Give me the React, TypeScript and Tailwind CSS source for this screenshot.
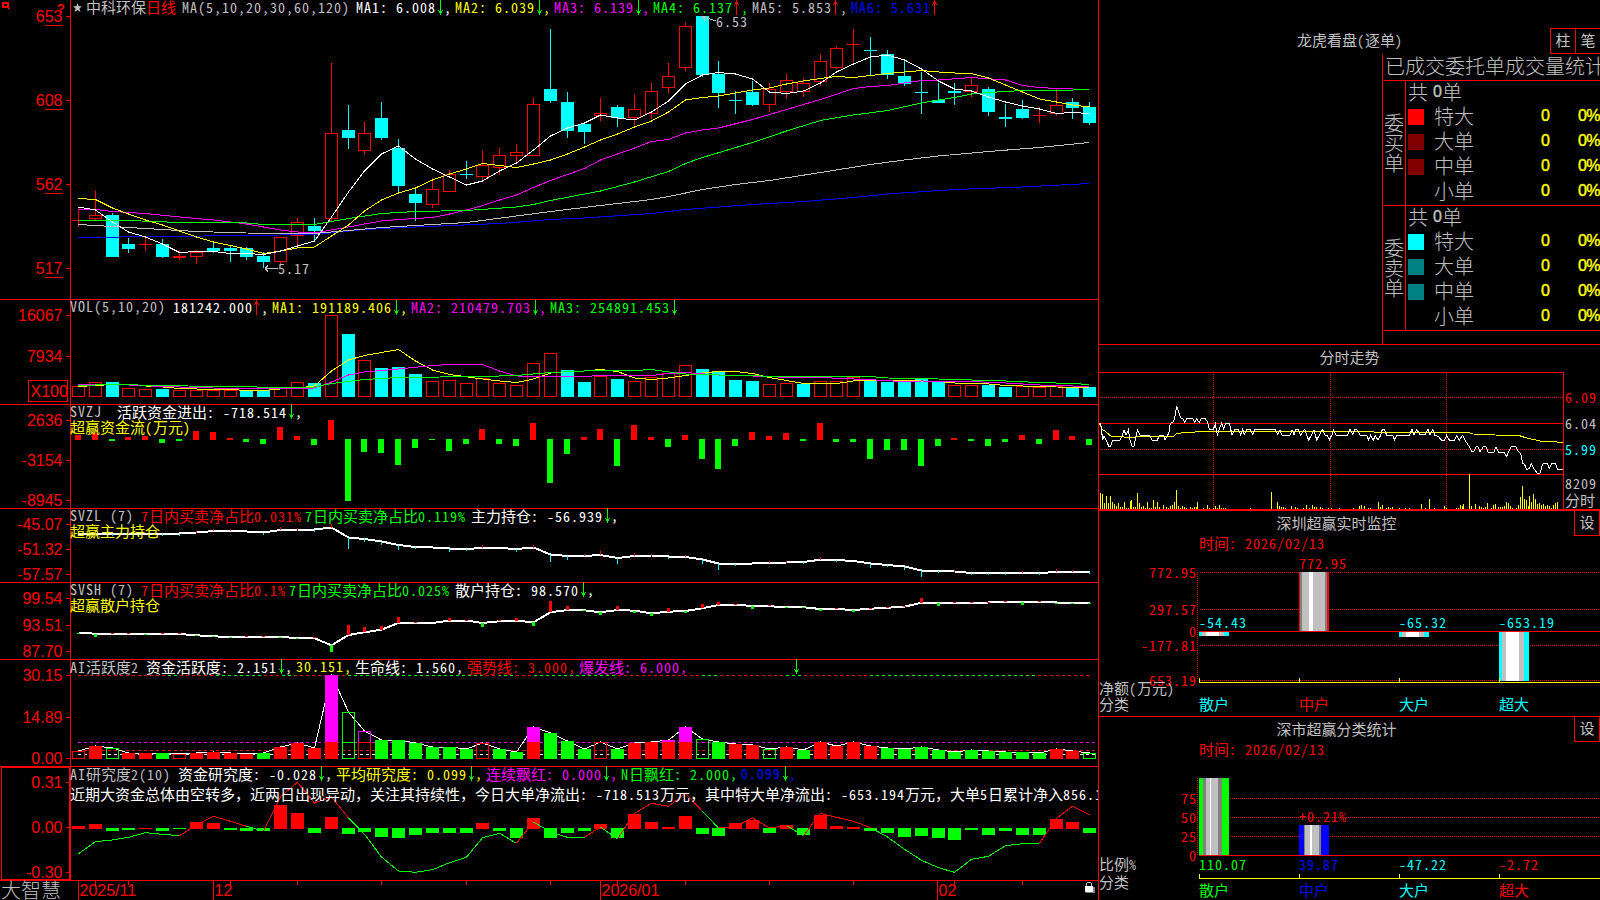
import React from 'react';

const RED = '#ff0000';
const GREEN = '#00ff00';
const CYAN = '#00ffff';
const YELLOW = '#ffff00';
const MAGENTA = '#ff00ff';
const BLUE = '#0000ff';
const SILVER = '#c0c0c0';
const GRAY = '#808080';
const WHITE = '#ffffff';

type Point = [number, number];

// Pixel column of the i-th trading day (7 days take 118px)
const dayX = (i: number) => Math.floor(78.35 + (i * 118) / 7);

const toPoints = (pts: Point[]) => pts.map(([i, y]) => `${dayX(i) + 0.5},${y}`).join(' ');
const series = (ys: number[]): Point[] => ys.map((y, i) => [i, y]);

/* ---------- data ---------- */

// [up/down, high, bodyTop, bodyBottom, low]
const candles: [string, number, number, number, number][] = [
  ['r', 209, 220, 221, 227], ['r', 191, 215, 219, 221], ['c', 213, 215, 257, 257], ['c', 238, 244, 249, 253],
  ['r', 237, 244, 245, 251], ['c', 239, 244, 257, 258], ['r', 250, 256, 258, 260], ['r', 250, 252, 257, 264],
  ['c', 242, 248, 251, 253], ['c', 246, 248, 251, 262], ['c', 247, 248, 257, 260], ['c', 252, 256, 262, 268],
  ['r', 237, 237, 262, 267], ['r', 218, 222, 236, 245], ['c', 218, 226, 231, 240], ['r', 63, 133, 219, 222],
  ['c', 105, 130, 138, 149], ['r', 122, 133, 151, 155], ['c', 102, 118, 138, 140], ['c', 139, 148, 186, 192],
  ['c', 188, 194, 203, 221], ['r', 178, 189, 205, 208], ['r', 170, 174, 192, 192], ['c', 161, 174, 175, 179],
  ['r', 150, 165, 177, 181], ['r', 148, 155, 168, 175], ['r', 144, 152, 156, 162], ['r', 98, 104, 156, 156],
  ['c', 29, 89, 101, 103], ['c', 92, 102, 131, 138], ['c', 122, 124, 132, 144], ['r', 98, 113, 116, 121],
  ['c', 105, 107, 118, 127], ['r', 94, 109, 118, 125], ['r', 83, 91, 114, 119], ['r', 63, 76, 88, 93],
  ['r', 22, 26, 68, 71], ['c', 16, 16, 75, 77], ['c', 61, 74, 93, 108], ['c', 91, 100, 101, 114],
  ['c', 81, 92, 105, 106], ['r', 83, 89, 105, 112], ['r', 74, 80, 92, 99], ['r', 78, 83, 92, 97],
  ['r', 54, 61, 82, 86], ['r', 46, 48, 68, 69], ['r', 29, 44, 45, 62], ['c', 37, 50, 51, 75],
  ['c', 50, 54, 75, 79], ['c', 59, 76, 84, 86], ['c', 72, 92, 93, 114], ['c', 83, 100, 103, 103],
  ['c', 83, 91, 93, 105], ['r', 78, 85, 92, 97], ['c', 87, 89, 112, 116], ['c', 104, 117, 119, 127],
  ['c', 100, 109, 118, 119], ['r', 107, 115, 116, 123], ['r', 89, 105, 114, 116], ['c', 98, 102, 108, 119],
  ['c', 102, 107, 123, 125],
];

const priceLines: { color: string; pts: Point[] }[] = [
  { color: BLUE, pts: [[0, 237.5], [5, 236.5], [10, 235.5], [14, 234.5], [17, 229.5], [20, 227], [25, 223.5], [28, 219.5], [30, 218], [34, 213.5], [36, 209.5], [40, 204.5], [43, 201.5], [46, 197.5], [48, 194], [52, 189.5], [56, 187], [60, 183.5]] },
  { color: SILVER, pts: [[0, 224.5], [2, 226.5], [4, 228.5], [7, 231.5], [10, 233], [14, 233.5], [16, 230.5], [18, 227.5], [20, 225.5], [23, 222.5], [26, 216], [28, 211.5], [31, 205.5], [34, 199.5], [35, 196.5], [37, 189.5], [39, 184.5], [41, 180.5], [44, 172.5], [47, 164.5], [49, 160], [51, 156], [54, 151.5], [57, 147.5], [60, 142.5]] },
  { color: MAGENTA, pts: [[0, 209.5], [1, 209.5], [2, 211.5], [4, 213.5], [6, 217], [8, 220], [9, 222], [10, 224], [11, 227], [12, 230], [13, 232], [14, 233], [16, 227], [17, 224], [18, 221], [19, 219.5], [21, 217.5], [22, 214], [23, 210], [24, 205.5], [25, 200], [26, 195], [27, 187.5], [28, 180.5], [30, 168.5], [31, 160], [33, 148], [34, 141.5], [35, 139.5], [36, 133], [37, 130], [38, 128], [40, 119.5], [42, 109.5], [44, 99.5], [46, 88.5], [47, 86.5], [48, 85.5], [50, 80.5], [51, 80], [53, 77.5], [55, 80], [56, 85.5], [57, 87.5], [58, 88.5], [59, 88.5]] },
  { color: GREEN, pts: [[0, 220.5], [3, 220.5], [6, 222.5], [10, 223], [11, 224.5], [14, 224.5], [16, 218.5], [18, 213.5], [20, 211.5], [23, 210.5], [26, 207], [27, 204.5], [28, 200.5], [31, 191], [33, 182], [35, 171.5], [36, 163.5], [37, 157.5], [40, 142.5], [42, 131], [44, 120.5], [46, 115], [48, 110.5], [50, 103], [52, 97.5], [53, 94], [54, 92.5], [56, 90.5], [58, 90.5], [60, 89.5]] },
  { color: YELLOW, pts: series([198.5, 199.5, 208, 214, 220, 225, 231, 237, 242, 245.5, 249, 253.5, 251, 248, 247, 236, 225, 211, 200, 193, 188, 180, 174, 169, 163.5, 165.5, 167.5, 164, 160, 154, 147, 140, 134, 127, 121, 112, 100, 97.5, 96, 93, 90, 88, 84, 81, 78.5, 76.5, 77.5, 75.5, 73.5, 72, 70.5, 72, 73, 73.5, 78, 85, 92, 99, 102, 105, 107]) },
  { color: WHITE, pts: series([207, 210, 222, 232, 237, 244, 252.5, 251.5, 251.5, 253.5, 253.5, 254.5, 251, 246, 241, 217, 192, 171, 154, 146, 159, 169, 177, 185, 181, 171, 163, 150, 136, 128, 123, 115, 118, 120, 112, 101, 84, 75, 72.5, 74, 79, 92, 93.5, 91, 83, 72, 64, 57, 55, 60, 69, 81, 89, 91, 97, 102, 106, 109, 113.5, 112.5, 113.5]) },
];

const volumeTops = [
  386, 382, 382, 388, 389, 389, 390, 390, 390, 390, 390, 390, 388, 382, 383, 315, 334, 360, 368, 367, 374, 381, 380, 383, 378, 383, 385, 363, 353, 370,
  382, 376, 379, 381, 377, 373, 365, 369, 371, 380, 381, 384, 383, 384, 381, 381, 377, 381, 382, 382, 379, 381, 385, 385, 385, 387, 386, 387, 386, 388, 387,
];
const volumeColors = 'rrcrrcrrrrccrrcrcrcccrrrrrrrrccrcrrrrccccrrcrrrcccccrrccrrrcc';

const volumeLines: { color: string; pts: Point[] }[] = [
  { color: YELLOW, pts: [[0, 386.5], [1, 385.5], [2, 384.5], [3, 384.5], [4, 386], [5, 387], [6, 388.5], [8, 389.5], [11, 390.5], [12, 389], [13, 388], [14, 386], [15, 371], [16, 360], [17, 355.5], [18, 352.5], [19, 349.5], [20, 361], [21, 370], [22, 374.5], [24, 379], [25, 381], [26, 382.5], [27, 379], [28, 373], [29, 371.5], [30, 371], [31, 369.5], [32, 371.5], [33, 378], [34, 379.5], [35, 378], [36, 375.5], [37, 373], [38, 371.5], [39, 371.5], [40, 373.5], [41, 377.5], [42, 380.5], [43, 383.5], [45, 383.5], [46, 381], [48, 380.5], [50, 381], [51, 381.5], [52, 383], [54, 384], [55, 385.5], [58, 387], [60, 387.5]] },
  { color: MAGENTA, pts: [[0, 384.5], [3, 385], [5, 386.5], [8, 388], [11, 389], [14, 388], [15, 382], [16, 375], [17, 372], [19, 369], [21, 365.5], [22, 364.5], [24, 364.5], [25, 371], [26, 376], [30, 376.5], [31, 375.5], [34, 375.5], [35, 373.5], [36, 372.5], [38, 375], [41, 376.5], [42, 377.5], [44, 377.5], [46, 379], [48, 380.5], [49, 382], [50, 381], [53, 381.5], [55, 383], [57, 385], [60, 386.5]] },
  { color: GREEN, pts: [[0, 385.5], [2, 384.5], [8, 386.5], [13, 387.5], [14, 387], [15, 383.5], [17, 379.5], [19, 377.5], [24, 376.5], [26, 375.5], [28, 372.5], [30, 371], [33, 370.5], [34, 369.5], [35, 372], [36, 374], [38, 375], [40, 375.5], [41, 376.5], [47, 376.5], [48, 378], [50, 378.5], [52, 379.5], [55, 381], [57, 382.5], [59, 383.5], [60, 384.5]] },
];

// Net inflow per day, signed bar heights
const flow = [
  5, 7, -2, 3, 4, -4, -2, 9, 8, 2, -3, -5, 13, 4, -6, 20, -62, -13, -14, -26, -9, -1, -12, -5, 11, -5, -7, 17, -44, -15,
  3, 11, -27, 15, 3, -8, 5, -20, -30, -7, 8, 4, 7, -2, 17, -3, -3, -20, -11, -11, -27, -7, 2, -2, -7, -3, 5, -5, 10, 4, -6,
];

const mainHold = [
  534, 533.5, 533.5, 533.5, 533.5, 533.5, 533.5, 532.5, 531, 531, 531.5, 532.5, 530, 529.5, 529.5, 527.5, 537.5, 539, 541.5, 545, 547, 547.5, 548.5, 549, 548, 548, 549, 547.5, 554.5, 556,
  556, 555, 558, 556, 555.5, 556.5, 557, 559.5, 563.5, 564, 563.5, 563, 562.5, 562, 559.7, 560, 561, 563.5, 565, 566.5, 570.5, 571, 571.5, 573, 573, 573, 573, 573, 572, 572, 572,
];
const mainTicks = [
  0, 1, -1, 1, 0, -1, -1, 1, 1, 1, 0, -1, 2, 1, -1, 3, -10, -2, -2, -4, -1, 0, -2, -1, 2, 0, -2, 2, -6, -3,
  1, 3, -5, 2, 1, -1, 1, -3, -5, -1, 0, 1, 1, -1, 2, -1, 0, -3, -1, -2, -5, -1, 1, -1, -1, -1, 1, -1, 2, 1, -1,
];

const retailHold = [
  632.7, 633.7, 634, 634, 634, 634, 634, 635.3, 636.3, 637, 637, 637, 637, 638, 638.3, 645.3, 635, 632.3, 629.7, 623, 623, 623, 620.5, 620.5, 623, 621.3, 620.7, 622.3, 612.3, 610,
  610.3, 612.3, 610, 610.7, 613.3, 611.7, 611, 608.3, 605, 604.7, 606, 606.3, 607, 607.3, 609, 609, 610, 608.7, 607.7, 606.7, 602.7, 603, 603, 603, 602.5, 602, 602, 602, 602.5, 603, 603,
];
const retailTicks = [
  -1, -3, 1, 1, -1, 1, 1, -1, -1, -1, 1, 1, -1, -1, 1, -7, 10, 5, 4, 6, 1, 0, 3, 1, -4, 1, 3, -4, 11, 4,
  -1, -3, 4, -2, -3, 4, -2, 4, 3, 1, -3, 1, -1, -1, -2, 1, -2, 1, 1, 1, 5, -3, 1, 1, 1, 1, -3, 1, -1, -1, -1,
];

// R/G filled, r/g hollow, M magenta over red, m hollow magenta over hollow red, h hollow green split at the burst line
const activityKinds = 'rRgRRGrRRRRGRRRMhmGGGGGGrGGMGGGrGRRMMgGRRgRGRRRRGGGGGGGGGGRRg';
const activityTops = [
  751, 746, 748, 753, 753, 753, 754, 753, 752, 753, 754, 753, 747, 743, 748, 675, 712, 731, 740, 740, 743, 747, 747, 749, 743, 749, 752, 727, 733, 741,
  749, 742, 749, 743, 742, 740, 727, 739, 742, 744, 745, 749, 747, 750, 742, 746, 742, 746, 748, 749, 747, 750, 752, 750, 751, 752, 752, 753, 749, 751, 753,
];
// [from, to, color]
const trendBand: [number, number, string][] = [
  [78, 165, RED], [165, 180, GREEN], [180, 214, RED], [214, 262, GREEN], [262, 281, RED], [281, 295, GREEN], [295, 348, RED], [348, 482, GREEN],
  [482, 499, RED], [499, 516, GREEN], [516, 533, RED], [533, 616, GREEN], [616, 701, RED], [701, 717, GREEN], [717, 786, RED], [786, 803, GREEN], [803, 870, RED], [870, 1038, GREEN], [1038, 1089, RED],
];

const research = [
  3, 5, -3, -2, 1, -3, -1, 7, 6, -2, -3, -3, 24, 16, -5, 12, -6, -4, -9, -10, -7, -5, -5, -5, 6, -3, -10, 11, -10, -5,
  -3, 5, -10, 15, 7, 2, 13, -6, -8, 6, 9, -5, 4, -7, 14, 3, 2, -3, -5, -9, -8, -10, -12, -2, -7, -3, -7, -7, 10, 7, -5,
];
const researchLine = [
  853.7, 841.7, 840, 837.3, 832.7, 834.3, 835.7, 825, 816.3, 821.3, 826.3, 831, 796.7, 782.3, 803, 797, 818, 834.3, 857, 871, 872.3, 869.7, 862.7, 857.3, 837.7, 833.3, 843.3, 822, 832, 837.3,
  837.3, 827, 839, 813.3, 803.3, 806.3, 793.3, 811.3, 828, 826.7, 817.7, 828, 825.7, 835.7, 813.3, 817.3, 821.3, 827.7, 837, 849.3, 860.3, 867.7, 872.3, 859.3, 856.3, 845.7, 843.7, 843.3, 818.3, 806.3, 814.7,
];
// [firstDay, lastDay, color]
const researchRuns: [number, number, string][] = [
  [0, 6, GREEN], [6, 10, RED], [10, 11, GREEN], [11, 16, RED], [16, 26, GREEN], [26, 27, RED], [27, 30, GREEN], [30, 31, RED], [31, 32, GREEN],
  [32, 37, RED], [37, 38, GREEN], [38, 42, RED], [42, 43, GREEN], [43, 47, RED], [47, 57, GREEN], [57, 60, RED],
];

// Intraday chart, in thirds of a pixel from its top left corner
const intraday =
  '28,250 32,250 38,300 42,288 48,300 56,318 62,318 68,300 90,300 97,285 102,270 108,285 115,270 120,300 126,318 132,318 138,290 142,270 150,286 178,286 186,300 202,300 208,286 220,286 225,300 232,286 236,282 241,250 250,245 254,235 260,199 266,216 272,234 278,236 284,248 290,236 308,236 314,248 320,236 328,248 334,236 346,236 352,245 358,267 370,268 376,252 382,284 390,262 395,250 401,268 407,250 418,250 426,284 434,268 445,268 452,284 458,268 463,284 470,268 480,268 488,284 495,268 555,268 563,284 570,270 576,286 600,286 606,270 612,284 618,268 625,268 632,286 644,268 650,286 656,300 664,286 672,270 680,300 688,286 698,268 705,286 712,286 718,300 726,284 730,270 738,286 772,286 780,268 788,284 795,268 802,270 810,286 830,286 836,300 842,286 850,300 856,288 864,300 872,286 877,268 884,270 890,286 908,286 914,300 920,286 958,286 966,268 972,284 980,268 990,284 1006,284 1014,268 1020,284 1028,268 1034,286 1046,290 1054,300 1064,300 1070,286 1078,300 1094,300 1100,288 1108,300 1118,286 1126,302 1138,320 1146,336 1152,334 1158,320 1164,320 1170,336 1180,320 1188,320 1194,336 1212,336 1218,320 1226,336 1242,336 1250,350 1258,330 1264,320 1278,320 1286,336 1292,340 1298,370 1304,374 1310,388 1318,386 1324,370 1332,386 1344,402 1350,400 1358,372 1372,370 1378,386 1386,370 1396,370 1402,388 1418,388';
const intradayAvg =
  '28,250 36,268 46,274 62,288 85,290 120,292 150,290 240,290 252,288 260,281 285,277 345,275 500,275 800,275 900,277 1135,277 1150,282 1215,285 1285,286 1310,294 1350,303 1418,307';
const thirds = (s: string) =>
  s.split(' ').map((p) => {
    const [x, y] = p.split(',').map(Number);
    return `${1090 + x / 3},${340 + y / 3}`;
  }).join(' ');

// [x offset, height]
const ticks: Point[] = [
  [10, 16], [12, 15], [14, 6], [16, 13], [18, 6], [20, 13], [22, 7], [24, 5], [26, 3], [28, 6], [30, 2], [32, 2], [34, 7], [36, 1], [38, 1], [40, 8], [41, 9], [43, 2], [45, 2], [47, 16],
  [49, 6], [51, 2], [53, 3], [55, 1], [57, 7], [59, 1], [61, 1], [63, 9], [65, 2], [67, 7], [69, 2], [73, 4], [76, 2], [78, 1], [80, 3], [82, 4], [84, 7], [86, 19], [88, 3], [90, 1], [92, 3],
  [94, 2], [96, 1], [100, 2], [102, 1], [104, 2], [106, 2], [107, 7], [113, 1], [117, 4], [119, 1], [123, 1], [125, 3], [127, 1], [129, 4], [131, 1], [133, 1], [135, 1], [160, 1], [181, 17],
  [187, 7], [189, 3], [191, 2], [193, 2], [195, 1], [201, 3], [205, 2], [207, 1], [213, 1], [216, 4], [219, 1], [222, 4], [224, 2], [226, 2], [230, 2], [232, 1], [238, 1], [241, 1], [249, 1],
  [263, 1], [269, 3], [271, 4], [274, 3], [278, 1], [280, 1], [288, 7], [290, 2], [292, 4], [296, 1], [298, 2], [300, 1], [302, 2], [309, 1], [315, 1], [319, 1], [331, 5], [335, 1], [339, 10],
  [344, 1], [354, 3], [356, 1], [366, 1], [368, 1], [370, 4], [372, 3], [373, 5], [379, 35], [381, 3], [385, 5], [389, 3], [391, 2], [393, 1], [395, 2], [397, 6], [401, 1], [403, 4], [405, 5],
  [408, 2], [410, 2], [412, 2], [414, 3], [416, 7], [418, 6], [420, 3], [422, 1], [426, 1], [428, 4], [430, 12], [432, 23], [434, 10], [436, 9], [438, 3], [439, 13], [441, 7], [443, 15],
  [445, 10], [447, 5], [449, 6], [451, 4], [453, 5], [455, 3], [457, 4], [459, 3], [461, 1], [463, 4], [465, 6], [467, 7],
];

/* ---------- text ---------- */

const FONT = '[font-family:"Noto_Sans_CJK_SC",sans-serif]';

// Latin runs sit on an 8px cell, Chinese characters on a 15px one
function Mixed({ text }: { text: string }) {
  return (
    <>
      {text.split(/([\u3000-\u9fff\uff00-\uffef]+)/).map((run, i) =>
        i % 2 ? <span key={i} className="text-[15px] tracking-normal [font-feature-settings:normal]">{run}</span> : run
      )}
    </>
  );
}

function Txt({ text, className = '' }: { text: string; className?: string }) {
  return (
    <span className={`whitespace-pre text-[14px] leading-[15px] tracking-[1px] [font-feature-settings:"hwid"] ${className}`}>
      <Mixed text={text} />
    </span>
  );
}

interface LabelProps {
  x: number;
  y: number; // vertical centre
  text: string;
  color: string;
  end?: boolean;
}

function Label({ x, y, text, color, end }: LabelProps) {
  return (
    <text
      x={x}
      y={y + 5}
      fill={color}
      textAnchor={end ? 'end' : 'start'}
      className='whitespace-pre text-[14px] tracking-[1px] [font-feature-settings:"hwid"]'
    >
      {text.split(/([\u3000-\u9fff]+)/).filter(Boolean).map((run, i) => (
        <tspan key={i} className={/[\u3000-\u9fff]/.test(run) ? 'text-[15px] tracking-normal' : ''}>{run}</tspan>
      ))}
    </text>
  );
}

function Arrow({ up }: { up?: boolean }) {
  return (
    <svg viewBox="0 0 8 15" className={up ? 'w-2 h-[15px] shrink-0 rotate-180' : 'w-2 h-[15px] shrink-0'} shapeRendering="crispEdges">
      <path d="M4 0h1v15h-1zM3 11h3v2h-3zM2 10h1v1h-1zM6 10h1v1h-1z" fill={up ? RED : GREEN} />
    </svg>
  );
}

interface ItemProps {
  text: string;
  color: string; // tailwind text colour
  dir?: 'up' | 'down';
  comma?: boolean;
}

function Item({ text, color, dir, comma = true }: ItemProps) {
  return (
    <span className={`flex mr-[3px] ${color}`}>
      <Txt text={text} />
      {dir && <Arrow up={dir === 'up'} />}
      {comma && <Txt text="," />}
    </span>
  );
}

/* ---------- left column ---------- */

interface PanelProps {
  top: number;
  height: string;
  ticks: [number, string][];
  axis?: React.ReactNode;
  chart: React.ReactNode;
  children?: React.ReactNode;
  lineH: number;
}

function Panel({ top, height, lineH, ticks: marks, axis, chart, children }: PanelProps) {
  return (
    <section className={`flex border-b border-[#ff0000] ${height}`}>
      <div className="w-[71px] shrink-0 border-r border-[#ff0000]">
        <svg className="block w-[70px] h-full overflow-visible" viewBox={`0 ${top} 70 ${lineH}`} shapeRendering="crispEdges">
          {marks.map(([y, label]) => (
            <g key={label}>
              <rect x={66} y={y} width={4} height={1} fill={RED} />
              <text x={62.5} y={y + 6} textAnchor="end" fill={RED} className='text-[16px] [font-family:"Liberation_Sans",sans-serif]'>
                {label}
              </text>
            </g>
          ))}
          {axis}
        </svg>
      </div>
      <div className="relative w-[1027px]">
        <svg className="absolute inset-0 w-full h-full" viewBox={`71 ${top} 1027 ${lineH}`} shapeRendering="crispEdges">
          {chart}
        </svg>
        <div className="relative -mt-px">{children}</div>
      </div>
    </section>
  );
}

function Lines({ lines, width = 1 }: { lines: { color: string; pts: Point[] }[]; width?: number }) {
  return (
    <>
      {lines.map((l) => (
        <polyline key={l.color} points={toPoints(l.pts)} fill="none" stroke={l.color} strokeWidth={width} />
      ))}
    </>
  );
}

function Box({ x, top, bottom, color, hollow }: { x: number; top: number; bottom: number; color: string; hollow?: boolean }) {
  return hollow ? (
    <rect x={x - 5.5} y={top + 0.5} width={12} height={Math.max(bottom - top - 1, 1)} fill="none" stroke={color} />
  ) : (
    <rect x={x - 6} y={top} width={13} height={bottom - top} fill={color} />
  );
}

function Candles() {
  return (
    <>
      {candles.map(([kind, high, top, bottom, low], i) => {
        const x = dayX(i);
        const color = kind === 'r' ? RED : CYAN;
        return (
          <g key={i}>
            <rect x={x} y={high} width={1} height={Math.max(top - high, 0)} fill={color} />
            <Box x={x} top={top} bottom={bottom} color={color} hollow={kind === 'r' && bottom - top > 2} />
            <rect x={x} y={bottom} width={1} height={Math.max(low - bottom, 0)} fill={color} />
          </g>
        );
      })}
      <Lines lines={priceLines} />
      <path d="M265 268.5h13M265 268.5l3 -3M265 268.5l3 3" stroke={SILVER} fill="none" />
      <path d="M702 16.5l14 4.5M702 16.5l3 4M702 16.5h4" stroke={SILVER} fill="none" />
      <Label x={278} y={269} text="5.17" color={SILVER} />
      <Label x={716} y={22} text="6.53" color={SILVER} />
    </>
  );
}

function Activity() {
  return (
    <>
      {trendBand.map(([from, to, color]) => (
        <line key={from} x1={from} x2={to} y1={675.5} y2={675.5} stroke={color} strokeDasharray="3 3" strokeDashoffset={(from - 78) % 6} />
      ))}
      <line x1={78} x2={1096} y1={742.5} y2={742.5} stroke={MAGENTA} strokeDasharray="3 3" />
      <line x1={78} x2={1096} y1={750.5} y2={750.5} stroke={RED} strokeDasharray="3 3" />
      <line x1={78} x2={1096} y1={754.5} y2={754.5} stroke={WHITE} strokeDasharray="3 3" />
      <Lines lines={[{ color: WHITE, pts: series(activityTops) }]} />
      {activityTops.map((top, i) => {
        const x = dayX(i);
        const kind = activityKinds[i];
        if (kind === 'M' || kind === 'm') {
          return (
            <g key={i}>
              <Box x={x} top={top} bottom={kind === 'm' ? 743 : 742} color={MAGENTA} hollow={kind === 'm'} />
              <Box x={x} top={742} bottom={759} color={RED} hollow={kind === 'm'} />
            </g>
          );
        }
        const color = 'rR'.includes(kind) ? RED : GREEN;
        return (
          <g key={i}>
            <Box x={x} top={top} bottom={759} color={color} hollow={'rgh'.includes(kind)} />
            {kind === 'h' && <rect x={x - 6} y={742} width={13} height={1} fill={color} />}
          </g>
        );
      })}
    </>
  );
}

function DateAxis() {
  const months: [number, string][] = [[78, '2025/11'], [213, '12'], [600, '2026/01'], [937, '02']];
  const weeks = [95, 128, 230, 297, 381, 466, 550, 617, 685, 769, 853, 954, 1022];
  return (
    <div className="flex h-[19px]">
      <div className={`w-[71px] pl-px -mt-px text-[20px] leading-[19px] font-light text-[#c0c0c0] ${FONT}`}>大智慧</div>
      <svg className="block w-[1027px] h-[19px]" viewBox="71 881 1027 19" shapeRendering="crispEdges">
        {weeks.map((x) => <rect key={x} x={x} y={881} width={1} height={4} fill={RED} />)}
        {months.map(([x, label]) => (
          <g key={label}>
            <rect x={x} y={881} width={1} height={19} fill={RED} />
            <text x={x + 1.5} y={896} fill={RED} className='text-[16px] [font-family:"Liberation_Sans",sans-serif]'>{label}</text>
          </g>
        ))}
        {/* padlock */}
        <path d="M1086 884v-1h1v-1h4v1h1v3h-1v-3h-4v3h-1z" fill={SILVER} />
        <rect x={1086} y={887} width={9} height={6} fill={GRAY} />
        <rect x={1085} y={886} width={8} height={6} fill={WHITE} />
      </svg>
    </div>
  );
}

function LeftColumn() {
  return (
    <main className="w-[1099px] shrink-0 overflow-hidden border-r border-[#ff0000]">
      <Panel
        top={0}
        lineH={299}
        height="h-[300px]"
        ticks={[[16, '653'], [100, '608'], [184, '562'], [268, '517']]}
        axis={
          <>
            {[25, 109, 193, 277].map((y) => <rect key={y} x={45} y={y} width={18} height={1} fill={RED} />)}
            <path d="M2 2h7v6h-7zM4 4v2h3v-2zM8 8h2v1h-2z" fill={RED} fillRule="evenodd" />
            <text x={57} y={13} fill={RED} className='text-[13px] font-bold [font-family:"Liberation_Sans",sans-serif]'>?</text>
          </>
        }
        chart={<Candles />}
      >
        <div className="flex pt-px">
          <svg className="w-[15px] h-[15px] shrink-0" viewBox="0 0 15 15">
            <path d="M6.5 3l1.2 3.2h3.3l-2.6 2.2 1 3.6-2.9-2-2.9 2 1-3.6-2.6-2.2h3.3z" fill={SILVER} />
          </svg>
          <Txt text="中科环保" className="-mt-px text-[#c0c0c0]" />
          <Txt text="日线" className="-mt-px text-[#ff0000]" />
          <Txt text="MA(5,10,20,30,60,120)" className="ml-[6px] mr-[6px] text-[#c0c0c0]" />
          <Item text="MA1: 6.008" color="text-[#ffffff]" dir="down" />
          <Item text="MA2: 6.039" color="text-[#ffff00]" dir="down" />
          <Item text="MA3: 6.139" color="text-[#ff00ff]" dir="down" />
          <Item text="MA4: 6.137" color="text-[#00ff00]" dir="up" />
          <Item text="MA5: 5.853" color="text-[#c0c0c0]" dir="up" />
          <Item text="MA6: 5.631" color="text-[#0000ff]" dir="up" comma={false} />
        </div>
      </Panel>

      <Panel
        top={300}
        lineH={104}
        height="h-[105px]"
        ticks={[[315, '16067'], [356, '7934']]}
        axis={
          <>
            <rect x={28.5} y={380.5} width={39} height={21} fill="none" stroke={RED} />
            <text x={30.5} y={397} fill={RED} className='text-[16px] [font-family:"Liberation_Sans",sans-serif]'>X100</text>
          </>
        }
        chart={
          <>
            {volumeTops.map((top, i) => (
              <Box key={i} x={dayX(i)} top={top} bottom={397} color={volumeColors[i] === 'r' ? RED : CYAN} hollow={volumeColors[i] === 'r'} />
            ))}
            <Lines lines={volumeLines} />
          </>
        }
      >
        <div className="flex -ml-px">
          <Txt text="VOL(5,10,20)" className="mr-[7px] text-[#c0c0c0]" />
          <div className="flex pt-px">
            <Item text="181242.000" color="text-[#ffffff]" dir="up" />
            <Item text="MA1: 191189.406" color="text-[#ffff00]" dir="down" />
            <Item text="MA2: 210479.703" color="text-[#ff00ff]" dir="down" />
            <Item text="MA3: 254891.453" color="text-[#00ff00]" dir="down" comma={false} />
          </div>
        </div>
      </Panel>

      <Panel
        top={405}
        lineH={103}
        height="h-[104px]"
        ticks={[[420, '2636'], [460, '-3154'], [500, '-8945']]}
        chart={flow.map((v, i) => (
          <rect key={i} x={dayX(i) - 3} y={v > 0 ? 440 - v : 439} width={6} height={Math.abs(v)} fill={v > 0 ? RED : GREEN} />
        ))}
      >
        <div className="flex -ml-px">
          <Txt text="SVZJ" className="mr-[15px] text-[#c0c0c0]" />
          <Item text="活跃资金进出: -718.514" color="text-[#ffffff]" dir="down" />
        </div>
        <Txt text="超赢资金流(万元)" className="block -mt-px -ml-px text-[#ffff00]" />
      </Panel>

      <Panel
        top={509}
        lineH={73}
        height="h-[74px]"
        ticks={[[524, '-45.07'], [549, '-51.32'], [574, '-57.57']]}
        chart={
          <>
            <Lines lines={[{ color: WHITE, pts: series(mainHold) }]} width={2} />
            {mainTicks.map((v, i) => (
              <rect key={i} x={dayX(i)} y={v > 0 ? mainHold[i] - v - 1 : mainHold[i]} width={1} height={Math.abs(v) + (v ? 1 : 0)} fill={v > 0 ? RED : CYAN} />
            ))}
          </>
        }
      >
        <div className="flex -ml-px">
          <Txt text="SVZL (7)" className="mr-[7px] text-[#c0c0c0]" />
          <Item text="7日内买卖净占比0.031%" color="text-[#ff0000]" comma={false} />
          <Item text="7日内买卖净占比0.119%" color="text-[#00ff00]" comma={false} />
          <Item text="主力持仓: -56.939" color="text-[#ffffff] ml-[2px]" dir="down" />
        </div>
        <Txt text="超赢主力持仓" className="block -mt-px -ml-px text-[#ffff00]" />
      </Panel>

      <Panel
        top={583}
        lineH={76}
        height="h-[77px]"
        ticks={[[598, '99.54'], [625, '93.51'], [651, '87.70']]}
        chart={
          <>
            <Lines lines={[{ color: WHITE, pts: series(retailHold) }]} width={2} />
            {retailTicks.map((v, i) => (
              <rect key={i} x={dayX(i) - 1} y={v > 0 ? retailHold[i] - v : retailHold[i]} width={3} height={Math.abs(v)} fill={v > 0 ? RED : GREEN} />
            ))}
          </>
        }
      >
        <div className="flex -ml-px">
          <Txt text="SVSH (7)" className="mr-[7px] text-[#c0c0c0]" />
          <Item text="7日内买卖净占比0.1%" color="text-[#ff0000]" comma={false} />
          <Item text="7日内买卖净占比0.025%" color="text-[#00ff00]" comma={false} />
          <Item text="散户持仓: 98.570" color="text-[#ffffff] ml-[2px]" dir="down" />
        </div>
        <Txt text="超赢散户持仓" className="block -mt-px -ml-px text-[#ffff00]" />
      </Panel>

      <Panel
        top={660}
        lineH={106}
        height="h-[107px]"
        ticks={[[675, '30.15'], [717, '14.89'], [758, '0.00']]}
        chart={<Activity />}
      >
        <div className="flex -mt-px -ml-px">
          <Txt text="AI活跃度2" className="mr-[7px] text-[#c0c0c0]" />
          <Item text="资金活跃度: 2.151" color="text-[#ffffff]" dir="down" />
          <Item text="30.151" color="text-[#ffff00]" />
          <Item text="生命线: 1.560" color="text-[#ffffff]" />
          <Item text="强势线: 3.000" color="text-[#ff0000]" />
          <Item text="爆发线: 6.000" color="text-[#ff00ff]" />
          <span className="ml-[101px]"><Arrow /></span>
        </div>
      </Panel>

      <Panel
        top={767}
        lineH={113}
        height="h-[114px]"
        ticks={[[782, '0.31'], [827, '0.00'], [872, '-0.30']]}
        axis={<rect x={1.5} y={767.5} width={68} height={112} fill="none" stroke={RED} />}
        chart={
          <>
            {research.map((v, i) => (
              <rect key={i} x={dayX(i) - 6} y={v > 0 ? 829 - v : 828} width={13} height={Math.abs(v)} fill={v > 0 ? RED : GREEN} />
            ))}
            {researchRuns.map(([from, to, color]) => (
              <polyline
                key={from}
                points={series(researchLine).slice(from, to + 1).map(([i, y]) => `${dayX(i) + 0.5},${y}`).join(' ')}
                fill="none"
                stroke={color}
              />
            ))}
          </>
        }
      >
        <div className="flex -mt-px -ml-px">
          <Txt text="AI研究度2(10)" className="mr-[7px] text-[#c0c0c0]" />
          <Item text="资金研究度: -0.028" color="text-[#ffffff]" dir="down" />
          <Item text="平均研究度: 0.099" color="text-[#ffff00]" dir="down" />
          <Item text="连续飘红: 0.000" color="text-[#ff00ff]" dir="down" />
          <Item text="N日飘红: 2.000" color="text-[#00ff00]" />
          <Item text="0.099" color="text-[#0000ff]" dir="down" />
        </div>
        <Txt
          text="近期大资金总体由空转多，近两日出现异动，关注其持续性，今日大单净流出: -718.513万元，其中特大单净流出: -653.194万元，大单5日累计净入856.1"
          className="block mt-1 -ml-px text-[#ffffff]"
        />
      </Panel>

      <DateAxis />
    </main>
  );
}

/* ---------- right column ---------- */

interface OrderBlockProps {
  side: string;
  swatches: string[];
}

function OrderBlock({ side, swatches }: OrderBlockProps) {
  return (
    <div className="flex h-[125px] ml-px border-b border-[#ff0000] text-[20px] leading-[20px] font-light text-[#c0c0c0]">
      <div className="flex items-center w-[22px] shrink-0 border-r border-[#ff0000]">
        <div className="w-[20px]">{side}</div>
      </div>
      <div className="flex-1">
        <div className="flex items-center h-[22px] pl-[2px]">
          共<span className='ml-[5px] w-[9px] text-[16px] font-normal [font-family:"Liberation_Sans",sans-serif] [-webkit-text-stroke:0.4px]'>0</span>单
        </div>
        {['特大', '大单', '中单', '小单'].map((name, i) => (
          <div key={name} className="flex items-center h-[25px]">
            <i className={`w-4 h-4 mt-[3px] ml-[2px] mr-[10px] shrink-0 ${swatches[i] ?? ''}`} />
            <span className="w-[80px]">{name}</span>
            <span className='w-[36px] text-right text-[16px] font-normal text-[#ffff00] [font-family:"Liberation_Sans",sans-serif] [-webkit-text-stroke:0.4px]'>0</span>
            <span className='w-[50px] text-right text-[16px] tracking-[-0.5px] font-normal text-[#ffff00] [font-family:"Liberation_Sans",sans-serif] [-webkit-text-stroke:0.4px]'>0%</span>
          </div>
        ))}
      </div>
    </div>
  );
}

function OrderPanel() {
  return (
    <section className="flex flex-col h-[345px] border-b border-[#ff0000]">
      <header className="flex items-end h-[54px]">
        <div className="w-[451px] pl-[198px] pb-[3px] text-[#c0c0c0]">
          <Txt text="龙虎看盘(逐单)" />
        </div>
        <div className="flex h-[26px] border border-r-0 border-[#ff0000] text-[15px] leading-[22px] text-center text-[#c0c0c0]">
          <span className="w-6">柱</span>
          <span className="w-[25px] border-l border-[#ff0000]">笔</span>
        </div>
      </header>
      <div className="flex-1 w-[218px] ml-[283px] border-l border-[#ff0000]">
        <h2 className="h-[26px] pl-[2px] overflow-hidden whitespace-nowrap text-[20px] leading-[23px] font-light text-[#c0c0c0]">已成交委托单成交量统计</h2>
        <div className="ml-px h-px bg-[#ff0000]" />
        <OrderBlock side="委买单" swatches={['bg-[#ff0000]', 'bg-[#800000]', 'bg-[#800000]']} />
        <OrderBlock side="委卖单" swatches={['bg-[#00ffff]', 'bg-[#008080]', 'bg-[#008080]']} />
      </div>
    </section>
  );
}

function IntradayPanel() {
  return (
    <section className="h-[166px]">
      <div className="flex justify-center h-[27px] pt-[4px] text-[#c0c0c0]">
        <Txt text="分时走势" />
      </div>
      <svg className="block w-[501px] h-[139px]" viewBox="1099 372 501 139" shapeRendering="crispEdges">
        <path d="M1099 372.5h464.5v137M1099 423.5h464M1099 474.5h464" stroke={RED} fill="none" />
        <rect x={1099} y={509} width={501} height={2} fill={RED} />
        <path d="M1100 397.5h463M1100 449.5h463M1213.5 374v135M1330.5 373v136M1446.5 373v136" stroke={RED} strokeDasharray="1 1" fill="none" />
        {ticks.map(([x, h]) => <rect key={x} x={1090 + x} y={509 - h} width={1} height={h} fill={YELLOW} />)}
        <polyline points={thirds(intradayAvg)} fill="none" stroke={YELLOW} />
        <polyline points={thirds(intraday)} fill="none" stroke={WHITE} />
        <Label x={1565} y={398} text="6.09" color={RED} />
        <Label x={1565} y={424} text="6.04" color={SILVER} />
        <Label x={1565} y={450} text="5.99" color={CYAN} />
        <Label x={1565} y={484} text="8209" color={SILVER} />
        <Label x={1565} y={501} text="分时" color={SILVER} />
      </svg>
    </section>
  );
}

interface TubeProps {
  x: number;
  y: number;
  h: number;
  bands: [number, string][];
}

// Bar shaded with vertical bands so it reads as a cylinder
function Tube({ x, y, h, bands }: TubeProps) {
  let left = x;
  return (
    <>
      {bands.map(([w, color], i) => {
        const at = left;
        left += w;
        return <rect key={i} x={at} y={y} width={w} height={h} fill={color} />;
      })}
    </>
  );
}

const outBands: [number, string][] = [[3, CYAN], [4, SILVER], [13, WHITE], [5, SILVER], [5, CYAN]];
const inBands: [number, string][] = [[1, RED], [2, GRAY], [7, SILVER], [4, WHITE], [12, SILVER], [2, GRAY], [2, RED]];
const smallBands: [number, string][] = [[4, GREEN], [3, GRAY], [4, SILVER], [1, WHITE], [7, SILVER], [4, GRAY], [7, GREEN]];
const midBands: [number, string][] = [[5, BLUE], [1, GRAY], [5, SILVER], [2, WHITE], [7, SILVER], [2, GRAY], [8, BLUE]];

function StatHeader({ title }: { title: string }) {
  return (
    <header className="flex h-[25px] text-[#c0c0c0]">
      <div className="flex justify-center w-[475px] pt-[4px]">
        <Txt text={title} />
      </div>
      <div className="w-[26px] h-[25px] border border-t-0 border-[#ff0000] text-center text-[15px] leading-[22px]">设</div>
    </header>
  );
}

function MonitorPanel() {
  return (
    <section className="h-[206px] border-b border-[#ff0000]">
      <StatHeader title="深圳超赢实时监控" />
      <svg className="block w-[501px] h-[180px]" viewBox="1099 536 501 180" shapeRendering="crispEdges">
        <Label x={1199} y={544} text="时间: 2026/02/13" color={RED} />
        <path d="M1197.5 572v108M1200 572.5h400M1200 609.5h400M1200 645.5h400M1200 680.5h400" stroke={RED} strokeDasharray="1 1" />
        <Label end x={1197} y={573} text="772.95" color={RED} />
        <Label end x={1197} y={610} text="297.57" color={RED} />
        <Label end x={1197} y={632} text="0" color={RED} />
        <Label end x={1197} y={646} text="-177.81" color={RED} />
        <Label end x={1197} y={681} text="-653.19" color={RED} />
        <Tube x={1199} y={632} h={4} bands={outBands} />
        <Tube x={1299} y={572} h={59} bands={inBands} />
        <Tube x={1399} y={632} h={5} bands={outBands} />
        <Tube x={1499} y={632} h={49} bands={outBands} />
        <rect x={1199} y={631} width={401} height={1} fill={RED} />
        <path d="M1199.5 678v4.5h400M1299.5 678v4M1399.5 678v4M1499.5 678v4" stroke={YELLOW} fill="none" />
        <Label x={1199} y={623} text="-54.43" color={CYAN} />
        <Label x={1299} y={564} text="772.95" color={RED} />
        <Label x={1399} y={623} text="-65.32" color={CYAN} />
        <Label x={1499} y={623} text="-653.19" color={CYAN} />
        <Label x={1099} y={689} text="净额(万元)" color={SILVER} />
        <Label x={1099} y={705} text="分类" color={SILVER} />
        <Label x={1199} y={705} text="散户" color={CYAN} />
        <Label x={1299} y={705} text="中户" color={RED} />
        <Label x={1399} y={705} text="大户" color={CYAN} />
        <Label x={1499} y={705} text="超大" color={CYAN} />
      </svg>
    </section>
  );
}

function CategoryPanel() {
  return (
    <section className="h-[183px]">
      <StatHeader title="深市超赢分类统计" />
      <svg className="block w-[501px] h-[158px]" viewBox="1099 742 501 158" shapeRendering="crispEdges">
        <Label x={1199} y={750} text="时间: 2026/02/13" color={RED} />
        <path d="M1197.5 778v77M1200 798.5h400M1200 817.5h400M1200 836.5h400" stroke={RED} strokeDasharray="1 1" />
        <Label end x={1197} y={799} text="75" color={RED} />
        <Label end x={1197} y={818} text="50" color={RED} />
        <Label end x={1197} y={837} text="25" color={RED} />
        <Label end x={1197} y={856} text="0" color={RED} />
        <Tube x={1199} y={778} h={77} bands={smallBands} />
        <Tube x={1299} y={825} h={30} bands={midBands} />
        <rect x={1199} y={855} width={401} height={1} fill={RED} />
        <path d="M1199.5 874v4.5h400M1299.5 874v4M1399.5 874v4M1499.5 874v4" stroke={YELLOW} fill="none" />
        <Label x={1299} y={817} text="+0.21%" color={RED} />
        <Label x={1199} y={865} text="110.07" color={GREEN} />
        <Label x={1299} y={865} text="39.87" color={BLUE} />
        <Label x={1399} y={865} text="-47.22" color={CYAN} />
        <Label x={1499} y={865} text="-2.72" color={RED} />
        <Label x={1099} y={865} text="比例%" color={SILVER} />
        <Label x={1099} y={883} text="分类" color={SILVER} />
        <Label x={1199} y={891} text="散户" color={GREEN} />
        <Label x={1299} y={891} text="中户" color={BLUE} />
        <Label x={1399} y={891} text="大户" color={CYAN} />
        <Label x={1499} y={891} text="超大" color={RED} />
      </svg>
    </section>
  );
}

export default function App() {
  return (
    <div className={`flex w-[1600px] h-[900px] overflow-hidden bg-black ${FONT}`}>
      <LeftColumn />
      <aside className="w-[501px] shrink-0">
        <OrderPanel />
        <IntradayPanel />
        <MonitorPanel />
        <CategoryPanel />
      </aside>
    </div>
  );
}
